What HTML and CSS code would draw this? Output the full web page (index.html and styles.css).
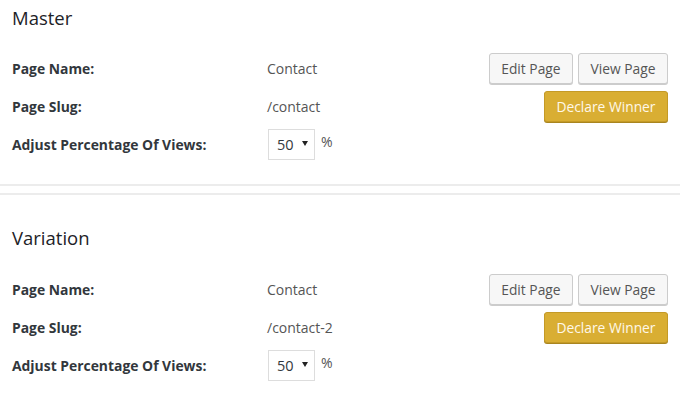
FILE: index.html
```html
<!DOCTYPE html>
<html>
<head>
<meta charset="utf-8">
<link rel="stylesheet" href="styles.css">
</head>
<body>
<section class="panel panel-master">
  <h2 class="panel-title">Master</h2>
  <div class="row">
    <div class="label">Page Name:</div>
    <div class="value">Contact</div>
    <div class="actions">
      <button class="btn">Edit Page</button>
      <button class="btn">View Page</button>
    </div>
  </div>
  <div class="row">
    <div class="label">Page Slug:</div>
    <div class="value">/contact</div>
    <div class="actions">
      <button class="btn btn-gold">Declare Winner</button>
    </div>
  </div>
  <div class="row">
    <div class="label">Adjust Percentage Of Views:</div>
    <div class="value value-select">
      <div class="select"><span class="select-text">50</span><span class="caret"></span></div>
      <span class="pct">%</span>
    </div>
  </div>
</section>
<section class="panel panel-variation">
  <h2 class="panel-title">Variation</h2>
  <div class="row">
    <div class="label">Page Name:</div>
    <div class="value">Contact</div>
    <div class="actions">
      <button class="btn">Edit Page</button>
      <button class="btn">View Page</button>
    </div>
  </div>
  <div class="row">
    <div class="label">Page Slug:</div>
    <div class="value">/contact-2</div>
    <div class="actions">
      <button class="btn btn-gold">Declare Winner</button>
    </div>
  </div>
  <div class="row">
    <div class="label">Adjust Percentage Of Views:</div>
    <div class="value value-select">
      <div class="select"><span class="select-text">50</span><span class="caret"></span></div>
      <span class="pct">%</span>
    </div>
  </div>
</section>
</body>
</html>
```
FILE: styles.css
```css
html, body {
  margin: 0;
  padding: 0;
  background: #ffffff;
}
body {
  font-family: "Open Sans", "Liberation Sans", sans-serif;
  font-size: 14px;
  color: #444;
}
.panel {
  padding: 0 12px;
}
.panel-master {
  padding-top: 6px;
  padding-bottom: 18px;
  border-bottom: 2px solid #ececec;
}
.panel-variation {
  margin-top: 7px;
  border-top: 2px solid #ececec;
  padding-top: 31px;
}
.panel-title {
  margin: 0;
  font-size: 18.5px;
  line-height: 24px;
  font-weight: 500;
  color: #1d2227;
}
.panel-master .panel-title {
  margin-bottom: 22px;
}
.panel-variation .panel-title {
  margin-bottom: 23px;
}
.row {
  display: flex;
  align-items: center;
  height: 32px;
  margin-bottom: 6px;
}
.label {
  width: 255px;
  flex: none;
  font-weight: 700;
  font-size: 13.9px;
  color: #32373c;
}
.value {
  flex: 1;
  color: #555;
  font-size: 14px;
}
.value-select {
  display: flex;
  align-items: center;
}
.select {
  width: 45px;
  height: 29px;
  border: 1px solid #dddddd;
  display: flex;
  align-items: center;
  box-sizing: content-box;
  margin-left: 1px;
  margin-top: 1px;
}
.select-text {
  margin-left: 8px;
  font-size: 14.5px;
  color: #32373c;
}
.caret {
  margin-left: 8px;
  width: 0;
  height: 0;
  border-left: 3px solid transparent;
  border-right: 3px solid transparent;
  border-top: 5px solid #222;
  margin-top: -3px;
}
.pct {
  margin-left: 6px;
  margin-top: -6px;
  color: #555;
}
.actions {
  display: flex;
  gap: 5px;
}
.btn {
  font-family: "Open Sans", "Liberation Sans", sans-serif;
  font-size: 13.8px;
  height: 31px;
  padding: 0 11.5px;
  border: 1px solid #cccccc;
  border-radius: 3px;
  background: #f7f7f7;
  color: #555;
  box-shadow: 0 1px 0 #cccccc;
  margin: 0;
  cursor: pointer;
}
.btn-gold {
  background: #d9ae33;
  border-color: #c49a27;
  box-shadow: 0 1px 0 #a9851f;
  color: #fff8e8;
  padding: 0 11.5px;
}
```
